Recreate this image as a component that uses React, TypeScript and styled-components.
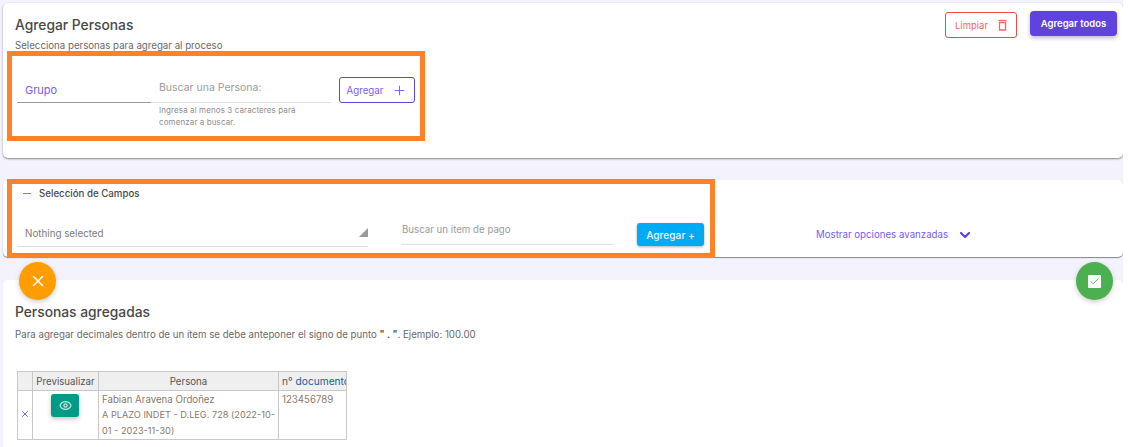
import React from 'react';
import styled, {createGlobalStyle} from "styled-components";
import {Check, ChevronDown, Eye, Plus, X} from "lucide-react";

const GlobalStyle = createGlobalStyle`
  html, body {
    margin: 0;
    height: 447px;
    overflow: hidden;
    background: #fff;
    font-family: Inter, "Liberation Sans", sans-serif;
  }
`

const TrashIcon = () => (
    <svg width="9" height="12" viewBox="0 0 9 12" fill="none" stroke="#f4655e" strokeWidth="1.3">
        <path d="M0.5 1.5h8"/>
        <path d="M1.5 3.5h6v7.5h-6z"/>
    </svg>
);

export default function App() {
    return (
        <Page>
            <GlobalStyle/>
            <PersonsCard>
                <PersonsHead>
                    <div>
                        <Title>Agregar Personas</Title>
                        <Subtitle>Selecciona personas para agregar al proceso</Subtitle>
                    </div>
                    <HeadActions>
                        <ClearButton>Limpiar <TrashIcon/></ClearButton>
                        <AddAllButton>Agregar todos</AddAllButton>
                    </HeadActions>
                </PersonsHead>
                <PersonsForm>
                    <GroupTab>Grupo</GroupTab>
                    <SearchField>
                        <SearchLabel>Buscar una Persona:</SearchLabel>
                        <Hint>Ingresa al menos 3 caracteres para comenzar a buscar.</Hint>
                    </SearchField>
                    <OutlineButton>Agregar <Plus size={15} strokeWidth={1.5}/></OutlineButton>
                </PersonsForm>
                <Highlight $left={4} $top={48} $width={418} $height={90}/>
            </PersonsCard>

            <FieldsCard>
                <FieldsTitle><Dash/>Selección de Campos</FieldsTitle>
                <FieldsRow>
                    <SelectBox>
                        Nothing selected
                        <Corner/>
                    </SelectBox>
                    <ItemSearch>Buscar un ítem de pago</ItemSearch>
                    <BlueButton>Agregar +</BlueButton>
                    <AdvancedLink>
                        Mostrar opciones avanzadas
                        <ChevronDown size={16} strokeWidth={3.2} color="#5f43dc"/>
                    </AdvancedLink>
                </FieldsRow>
                <Highlight $left={4} $top={-1} $width={708} $height={79}/>
            </FieldsCard>

            <AddedCard>
                <RoundButton $side="left" $color="#ff9d00"><X size={18} color="#fff"/></RoundButton>
                <RoundButton $side="right" $color="#4caf50">
                    <CheckBox><Check size={11} color="#4caf50"/></CheckBox>
                </RoundButton>
                <Title>Personas agregadas</Title>
                <Note>Para agregar decimales dentro de un ítem se debe anteponer el signo de punto <b>" . "</b>. Ejemplo: 100.00</Note>
                <PeopleTable>
                    <colgroup>
                        <col style={{width: 15}}/>
                        <col style={{width: 66}}/>
                        <col style={{width: 180}}/>
                        <col style={{width: 68}}/>
                    </colgroup>
                    <thead>
                    <tr>
                        <HeadCell/>
                        <HeadCell>Previsualizar</HeadCell>
                        <HeadCell>Persona</HeadCell>
                        <HeadCell $clip>n° <DocWord>documento</DocWord></HeadCell>
                    </tr>
                    </thead>
                    <tbody>
                    <tr>
                        <RemoveCell><X size={10} strokeWidth={2}/></RemoveCell>
                        <PreviewCell><EyeButton><Eye size={13} strokeWidth={2.4} color="#bfe8e1"/></EyeButton></PreviewCell>
                        <BodyCell>
                            <div>Fabian Aravena Ordoñez</div>
                            <Contract>A PLAZO INDET - D.LEG. 728 (2022-10-01 - 2023-11-30)</Contract>
                        </BodyCell>
                        <BodyCell>123456789</BodyCell>
                    </tr>
                    </tbody>
                </PeopleTable>
            </AddedCard>
        </Page>
    );
}

const Page = styled.div`
  width: 1120px;
  height: 444px;
  padding: 3px 0 0 3px;
  display: flex;
  flex-direction: column;
  overflow: hidden;
  background: #f3f2fd;
`
const Card = styled.section`
  position: relative;
  background: #fff;
  border-radius: 5px;
  flex-shrink: 0;
`
const PersonsCard = styled(Card)`
  height: 155px;
  box-shadow: 0 1px 2px rgba(60, 60, 60, .6);
  padding: 14px 6px 0 12px;
  box-sizing: border-box;
`
const PersonsHead = styled.div`
  display: flex;
  justify-content: space-between;
`
const Title = styled.h2`
  margin: 0;
  font-size: 13.8px;
  line-height: 17px;
  font-weight: 500;
  color: #484848;
`
const Subtitle = styled.p`
  margin: 6px 0 0;
  font-size: 9.7px;
  line-height: 12px;
  color: #6a6a6a;
`
const HeadActions = styled.div`
  display: flex;
  align-items: flex-start;
  gap: 13px;
  margin-top: -6px;
`
const ClearButton = styled.button`
  width: 72px;
  height: 26px;
  margin-top: 1px;
  display: flex;
  align-items: center;
  justify-content: center;
  gap: 10px;
  background: #fff;
  border: 1px solid #ef4b43;
  border-radius: 3px;
  color: #f4655e;
  font: 400 9.5px Inter, sans-serif;
  padding: 0;
`
const AddAllButton = styled.button`
  width: 87px;
  height: 25px;
  background: #5f43dc;
  border: 0;
  border-radius: 4px;
  color: #fff;
  font: 600 9.5px Inter, sans-serif;
  padding: 0;
  box-shadow: 0 2px 4px rgba(60, 50, 120, .35);
`
const PersonsForm = styled.div`
  display: flex;
  align-items: flex-start;
  margin-top: 19px;
`
const GroupTab = styled.div`
  width: 134px;
  height: 32px;
  margin-left: 2px;
  padding: 12px 0 0 8px;
  box-sizing: border-box;
  border-bottom: 1px solid #9a9a9a;
  color: #7a5cf0;
  font-size: 11px;
  line-height: 14px;
`
const SearchField = styled.div`
  width: 180px;
`
const SearchLabel = styled.div`
  height: 32px;
  padding: 10px 0 0 8px;
  box-sizing: border-box;
  border-bottom: 1px solid #e0e0e0;
  color: #9c9c9c;
  font-size: 10.5px;
  line-height: 14px;
`
const Hint = styled.div`
  margin-top: 1px;
  padding: 0 20px 0 8px;
  color: #8d8d8d;
  font-size: 8px;
  line-height: 12px;
  letter-spacing: .1px;
`
const OutlineButton = styled.button`
  width: 76px;
  height: 26px;
  margin: 6px 0 0 8px;
  display: flex;
  align-items: center;
  justify-content: center;
  gap: 9px;
  background: #fff;
  border: 1px solid #5f43dc;
  border-radius: 3px;
  color: #7a5cf0;
  font: 400 9.7px Inter, sans-serif;
  padding: 0;
`
const Highlight = styled.div<{ $left: number, $top: number, $width: number, $height: number }>`
  position: absolute;
  left: ${props => props.$left}px;
  top: ${props => props.$top}px;
  width: ${props => props.$width}px;
  height: ${props => props.$height}px;
  box-sizing: border-box;
  border: 5px solid #ff8229;
  pointer-events: none;
`
const FieldsCard = styled(Card)`
  height: 77px;
  margin-top: 22px;
  box-shadow: 0 1px 1px rgba(60, 60, 60, .6);
  padding-top: 6px;
  box-sizing: border-box;
`
const FieldsTitle = styled.div`
  display: flex;
  align-items: center;
  height: 14px;
  padding-left: 20px;
  font-size: 9.7px;
  font-weight: 500;
  color: #484848;
`
const Dash = styled.span`
  width: 8px;
  height: 1px;
  margin: 1px 8px 0 0;
  background: #00bcd4;
`
const FieldsRow = styled.div`
  display: flex;
  align-items: flex-start;
  margin-top: 23px;
  padding-left: 14px;
`
const SelectBox = styled.div`
  position: relative;
  width: 351px;
  height: 24px;
  padding: 4px 0 0 8px;
  box-sizing: border-box;
  border-bottom: 1px solid #dedede;
  color: #7c7c7c;
  font-size: 9.8px;
  line-height: 13px;
`
const Corner = styled.span`
  position: absolute;
  right: 0;
  top: 5px;
  width: 0;
  height: 0;
  border-left: 9px solid transparent;
  border-bottom: 9px solid #9a9a9a;
`
const ItemSearch = styled.div`
  width: 212px;
  height: 22px;
  margin-left: 33px;
  padding: 0 0 0 1px;
  box-sizing: border-box;
  border-bottom: 1px solid #e0e0e0;
  color: #9a9a9a;
  font-size: 9.7px;
  line-height: 13px;
`
const BlueButton = styled.button`
  width: 67px;
  height: 23px;
  margin: 0 0 0 24px;
  background: #00aaf5;
  border: 0;
  border-radius: 3px;
  color: #e8f7ff;
  font: 500 10.2px Inter, sans-serif;
  padding: 0;
  box-shadow: 0 1px 3px rgba(30, 60, 90, .4);
`
const AdvancedLink = styled.div`
  display: flex;
  align-items: center;
  gap: 9px;
  margin: 4px 0 0 112px;
  color: #7a5cf0;
  font-size: 9.7px;
  line-height: 16px;
`
const AddedCard = styled(Card)`
  height: 200px;
  margin-top: 23px;
  padding: 24px 12px 0;
  box-sizing: border-box;
`
const RoundButton = styled.div<{ $side: "left" | "right", $color: string }>`
  position: absolute;
  top: -18px;
  ${props => props.$side === "left" ? "left: 16px;" : "right: 10px;"}
  width: 37px;
  height: 38px;
  border-radius: 50%;
  background: ${props => props.$color};
  display: flex;
  align-items: center;
  justify-content: center;
  box-shadow: 0 2px 5px rgba(60, 60, 60, .25);
`
const CheckBox = styled.span`
  width: 13px;
  height: 13px;
  background: #fff;
  border-radius: 1px;
  display: flex;
  align-items: center;
  justify-content: center;
`
const Note = styled.p`
  margin: 8px 0 0;
  font-size: 9.7px;
  line-height: 12px;
  color: #6a6a6a;

  b {
    font-weight: 600;
    color: #484848;
  }
`
const PeopleTable = styled.table`
  margin: 30px 0 0 2px;
  width: 330px;
  table-layout: fixed;
  border-collapse: collapse;
  font-size: 9.7px;
`
const HeadCell = styled.th<{ $clip?: boolean }>`
  height: 19px;
  padding: 0;
  box-sizing: border-box;
  border: 1px solid #c8c8c8;
  background: #efefef;
  color: #555;
  font-weight: 400;
  text-align: ${props => props.$clip ? "left" : "center"};
  white-space: nowrap;
  overflow: hidden;
  ${props => props.$clip ? "padding-left: 3px; font-size: 10.2px;" : ""}
`
const DocWord = styled.span`
  color: #1a5a9a;
`
const BodyCell = styled.td`
  padding: 1px 3px 0 3px;
  vertical-align: top;
  border: 1px solid #c8c8c8;
  color: #8a7a6a;
  line-height: 15px;
`
const Contract = styled.div`
  font-size: 9.2px;
  line-height: 16px;
`
const RemoveCell = styled.td`
  border: 1px solid #c8c8c8;
  padding: 0;
  text-align: center;
  vertical-align: middle;
  color: #5f43dc;
`
const PreviewCell = styled.td`
  border: 1px solid #c8c8c8;
  padding: 3px 1px 0 0;
  vertical-align: top;
  text-align: center;
`
const EyeButton = styled.span`
  display: inline-flex;
  align-items: center;
  justify-content: center;
  width: 28px;
  height: 23px;
  border-radius: 3px;
  background: #009b86;
  box-shadow: 0 2px 4px rgba(60, 60, 60, .3);
`
